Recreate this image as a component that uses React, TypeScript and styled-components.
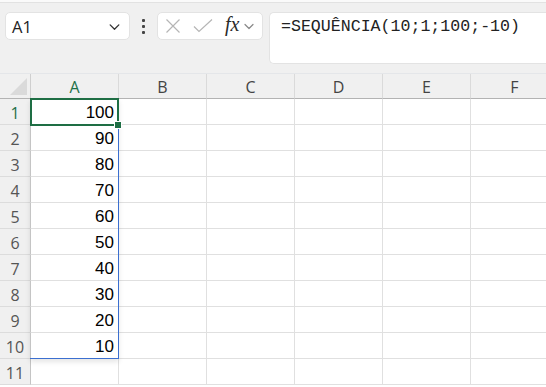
import { Fragment } from 'react'
import styled, { createGlobalStyle } from 'styled-components'

const GlobalStyle = createGlobalStyle`
  html, body {
    margin: 0;
    padding: 0;
    overflow: hidden;
    background: #ffffff;
  }
  * {
    box-sizing: border-box;
  }
`

const Page = styled.div`
  width: 546px;
  height: 387px;
  overflow: hidden;
  display: flex;
  flex-direction: column;
  background: #ffffff;
`

const RibbonEdge = styled.div`
  height: 3px;
  background: #fafafa;
  border-bottom: 1px solid #e2e2e2;
  flex: none;
`

const Toolbar = styled.div`
  height: 71px;
  flex: none;
  background: #f0f0f0;
  display: flex;
  align-items: flex-start;
  padding: 9px 0 0 5px;
  border-bottom: 1px solid #e4e6e9;
`

const NameBox = styled.div`
  width: 125px;
  height: 28px;
  background: #fff;
  border: 1px solid #e3e3e3;
  border-radius: 5px;
  display: flex;
  align-items: center;
  justify-content: space-between;
  padding: 0 8px 0 6px;
  font-family: 'Open Sans', 'Noto Sans', sans-serif;
  font-size: 16.5px;
  color: #222;
`

const Dots = styled.div`
  width: 27px;
  height: 28px;
  display: flex;
  flex-direction: column;
  align-items: center;
  justify-content: center;
  gap: 3px;
  span {
    width: 3px;
    height: 3px;
    background: #444;
    border-radius: 1px;
  }
`

const FxBox = styled.div`
  width: 106px;
  height: 28px;
  background: #fff;
  border: 1px solid #e3e3e3;
  border-radius: 5px;
  display: flex;
  align-items: center;
  padding: 0 0 0 7px;
`

const FxLabel = styled.span`
  font-family: 'Liberation Serif', 'DejaVu Serif', serif;
  font-style: italic;
  font-size: 20px;
  color: #2a2a2a;
  margin: -3px 4px 0 12px;
`

const FormulaBar = styled.div`
  flex: 1;
  height: 52px;
  margin-left: 6px;
  background: #fff;
  border: 1px solid #e3e3e3;
  border-right: none;
  border-radius: 5px 0 0 5px;
  padding: 4px 0 0 11px;
  font-family: 'Liberation Mono', 'DejaVu Sans Mono', monospace;
  font-size: 16.6px;
  color: #222;
  white-space: nowrap;
`

const Sheet = styled.div`
  position: relative;
  flex: 1;
  overflow: hidden;
  background: #fff;
`

const Grid = styled.div`
  display: grid;
  grid-template-columns: 31px repeat(6, 88px);
  grid-template-rows: 25px repeat(11, 26px);
`

const Corner = styled.div`
  background: #f0f0f0;
  border-right: 1px solid #cfcfcf;
  border-bottom: 1px solid #b3b3b3;
  position: relative;
  overflow: hidden;
  &::after {
    content: '';
    position: absolute;
    right: 3px;
    bottom: 3px;
    width: 0;
    height: 0;
    border-left: 17px solid transparent;
    border-bottom: 17px solid #dadada;
  }
`

const ColHead = styled.div<{ $active?: boolean }>`
  background: #f0f0f0;
  border-right: 1px solid #dadada;
  border-bottom: 1px solid #b3b3b3;
  display: flex;
  align-items: center;
  justify-content: center;
  padding-top: 2px;
  font-family: 'Open Sans', 'Noto Sans', sans-serif;
  font-size: 16px;
  color: ${p => (p.$active ? '#1e7048' : '#444')};
`

const RowHead = styled.div<{ $active?: boolean }>`
  background: #f0f0f0;
  border-right: 1px solid #c4c4c4;
  border-bottom: 1px solid #dcdcdc;
  display: flex;
  align-items: center;
  justify-content: center;
  padding-top: 2px;
  font-family: 'Open Sans', 'Noto Sans', sans-serif;
  font-size: 16px;
  color: ${p => (p.$active ? '#1e7048' : '#555')};
`

const Cell = styled.div`
  border-right: 1px solid #e0e0e0;
  border-bottom: 1px solid #e0e0e0;
  display: flex;
  align-items: center;
  justify-content: flex-end;
  padding: 3px 4px 0 0;
  font-family: 'Liberation Sans', Arial, sans-serif;
  font-size: 17px;
  color: #000;
`

const SpillRange = styled.div`
  position: absolute;
  left: 30px;
  top: 24px;
  width: 89px;
  height: 261px;
  border-right: 1px solid #3b6fd0;
  border-bottom: 1px solid #3b6fd0;
  box-shadow: 0 3px 5px rgba(0, 0, 0, 0.1);
  pointer-events: none;
`

const Selection = styled.div`
  position: absolute;
  left: 30px;
  top: 24px;
  width: 89px;
  height: 28px;
  border: 2px solid #1e6e44;
  pointer-events: none;
`

const FillHandle = styled.div`
  position: absolute;
  right: -5px;
  bottom: -5px;
  width: 6px;
  height: 6px;
  background: #1e6e44;
  border: 1px solid #fff;
  box-sizing: content-box;
`

const Chevron = ({ size = 12, color = '#444' }: { size?: number; color?: string }) => (
  <svg width={size} height={size} viewBox="0 0 12 12" fill="none">
    <path d="M2 4.5 L6 8.5 L10 4.5" stroke={color} strokeWidth="1.2" strokeLinecap="round" strokeLinejoin="round" />
  </svg>
)

const cols = ['A', 'B', 'C', 'D', 'E', 'F']
const values = [100, 90, 80, 70, 60, 50, 40, 30, 20, 10]

export default function App() {
  const rows = Array.from({ length: 11 }, (_, i) => i + 1)
  return (
    <Page>
      <GlobalStyle />
      <RibbonEdge />
      <Toolbar>
        <NameBox>
          <span>A1</span>
          <Chevron size={13} color="#333" />
        </NameBox>
        <Dots>
          <span />
          <span />
          <span />
        </Dots>
        <FxBox>
          <svg width="16" height="16" viewBox="0 0 16 16" fill="none">
            <path d="M1.5 1.5 L14.5 14.5 M14.5 1.5 L1.5 14.5" stroke="#b5b5b5" strokeWidth="1.2" />
          </svg>
          <svg width="20" height="16" viewBox="0 0 20 16" fill="none" style={{ marginLeft: 12 }}>
            <path d="M1 8.5 L6 13.5 L19 1.5" stroke="#b5b5b5" strokeWidth="1.2" />
          </svg>
          <FxLabel>fx</FxLabel>
          <Chevron size={12} color="#888" />
        </FxBox>
        <FormulaBar>=SEQUÊNCIA(10;1;100;-10)</FormulaBar>
      </Toolbar>
      <Sheet>
        <Grid>
          <Corner />
          {cols.map(c => (
            <ColHead key={c} $active={c === 'A'}>
              {c}
            </ColHead>
          ))}
          {rows.map(r => (
            <Fragment key={r}>
              <RowHead $active={r === 1}>{r}</RowHead>
              {cols.map(c => (
                <Cell key={c}>{c === 'A' && r <= 10 ? values[r - 1] : ''}</Cell>
              ))}
            </Fragment>
          ))}
        </Grid>
        <SpillRange />
        <Selection>
          <FillHandle />
        </Selection>
      </Sheet>
    </Page>
  )
}
